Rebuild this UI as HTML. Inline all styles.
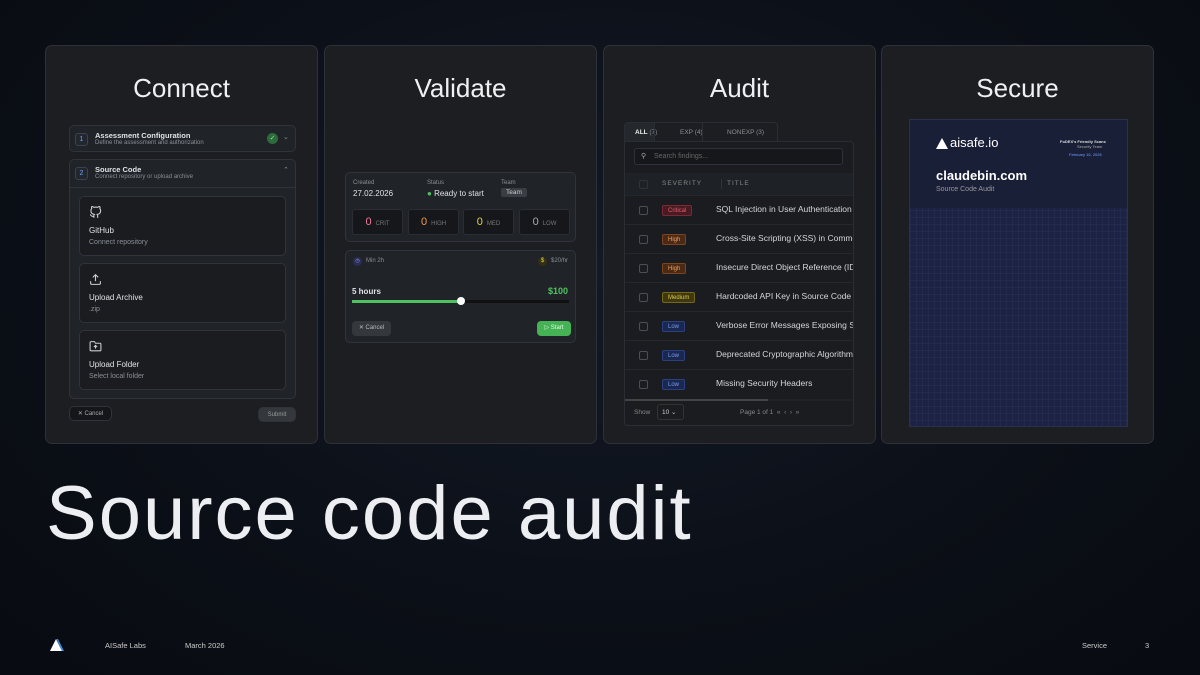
<!DOCTYPE html>
<html><head><meta charset="utf-8"><style>
*{margin:0;padding:0;box-sizing:border-box}
body{width:1200px;height:675px;overflow:hidden;background:radial-gradient(ellipse at 50% 40%,#131a26 0%,#0b0f17 60%,#080b11 100%);font-family:"Liberation Sans",sans-serif;color:#e6e8eb;position:relative}
.card{position:absolute;top:45px;width:273px;height:399px;background:#1c1e22;border:1px solid #2e3137;border-radius:7px}
.ttl{position:absolute;top:27px;width:100%;text-align:center;font-size:26px;color:#eef0f2}
.abs{position:absolute}
.box{position:absolute;border:1px solid #30333a;border-radius:5px;background:#1a1c20}
.s{font-size:7px;color:#8a8f97}
.w{font-size:8px;color:#e0e2e5}
.num{display:inline-block;width:13px;height:13px;border:1px solid #3a4150;border-radius:3px;font-size:7px;color:#6aa0ff;text-align:center;line-height:12px;background:#22262d}
.stat{position:absolute;top:36px;width:51px;height:26px;background:#15171a;border:1px solid #2a2d33;border-radius:3px;font-size:6px;color:#777;line-height:25px;text-align:center}
.stat b{font-size:11px;font-weight:normal;margin-right:4px}
.row{position:absolute;left:0;width:229px;height:29px;border-top:1px solid #24272c}
.cb{position:absolute;left:14px;top:10px;width:9px;height:9px;border:1px solid #4a4e56;border-radius:2px}
.bd{position:absolute;left:37px;top:9px;height:11px;border-radius:2px;font-size:6px;line-height:10px;padding:0 5px}
.rt{position:absolute;left:91px;top:8px;font-size:8.5px;color:#d4d6da;white-space:nowrap}
</style></head><body>

<div class="card" style="left:45px"><div class="ttl">Connect</div>
 <div class="box" style="left:23px;top:79px;width:227px;height:27px;background:#202328">
  <span class="num abs" style="left:5px;top:7px">1</span>
  <div class="abs w" style="left:25px;top:5px;font-weight:bold;font-size:7.5px">Assessment Configuration</div>
  <div class="abs s" style="left:25px;top:14px;font-size:6px">Define the assessment and authorization</div>
  <div class="abs" style="left:197px;top:7px;width:11px;height:11px;border-radius:50%;background:#2e6b3a;color:#8fe39a;font-size:7px;text-align:center;line-height:11px">✓</div>
  <div class="abs s" style="left:213px;top:7px">⌄</div>
 </div>
 <div class="box" style="left:23px;top:113px;width:227px;height:240px;background:#202328">
  <span class="num abs" style="left:5px;top:7px">2</span>
  <div class="abs w" style="left:25px;top:5px;font-weight:bold;font-size:7.5px">Source Code</div>
  <div class="abs s" style="left:25px;top:14px;font-size:6px">Connect repository or upload archive</div>
  <div class="abs s" style="left:213px;top:6px">⌃</div>
  <div class="abs" style="left:0;top:27px;width:225px;border-top:1px solid #30333a"></div>
  <div class="box" style="left:9px;top:36px;width:207px;height:60px">
   <svg class="abs" style="left:9px;top:9px" width="13" height="13" viewBox="0 0 24 24" fill="none" stroke="#ccc" stroke-width="2"><path d="M9 19c-5 1.5-5-2.5-7-3m14 6v-3.9a3.4 3.4 0 0 0-.9-2.6c3.1-.3 6.4-1.5 6.4-7A5.4 5.4 0 0 0 20 4.8 5 5 0 0 0 19.9 1S18.7.7 16 2.5a13.4 13.4 0 0 0-7 0C6.3.7 5.1 1 5.1 1A5 5 0 0 0 5 4.8 5.4 5.4 0 0 0 3.5 8.5c0 5.4 3.3 6.6 6.4 7a3.4 3.4 0 0 0-.9 2.6V22"/></svg>
   <div class="abs w" style="left:9px;top:29px">GitHub</div><div class="abs s" style="left:9px;top:42px">Connect repository</div></div>
  <div class="box" style="left:9px;top:103px;width:207px;height:60px">
   <svg class="abs" style="left:9px;top:9px" width="13" height="13" viewBox="0 0 24 24" fill="none" stroke="#ccc" stroke-width="2"><path d="M21 15v4a2 2 0 0 1-2 2H5a2 2 0 0 1-2-2v-4M17 8l-5-5-5 5M12 3v12"/></svg>
   <div class="abs w" style="left:9px;top:29px">Upload Archive</div><div class="abs s" style="left:9px;top:42px">.zip</div></div>
  <div class="box" style="left:9px;top:170px;width:207px;height:60px">
   <svg class="abs" style="left:9px;top:9px" width="13" height="13" viewBox="0 0 24 24" fill="none" stroke="#ccc" stroke-width="2"><path d="M4 20h16a2 2 0 0 0 2-2V8a2 2 0 0 0-2-2h-8l-2-3H4a2 2 0 0 0-2 2v13a2 2 0 0 0 2 2zM12 10v6M9 13l3-3 3 3"/></svg>
   <div class="abs w" style="left:9px;top:29px">Upload Folder</div><div class="abs s" style="left:9px;top:42px">Select local folder</div></div>
 </div>
 <div class="box abs" style="left:23px;top:360px;width:43px;height:15px;background:#141619;font-size:6px;color:#aaa;text-align:center;line-height:14px">✕ Cancel</div>
 <div class="box abs" style="left:212px;top:361px;width:38px;height:15px;background:#34373c;font-size:6px;color:#999;text-align:center;line-height:14px">Submit</div>
</div>

<div class="card" style="left:324px"><div class="ttl">Validate</div>
 <div class="box" style="left:20px;top:126px;width:231px;height:70px;background:#202328">
  <div class="abs s" style="left:7px;top:7px;font-size:6px">Created</div><div class="abs w" style="left:7px;top:16px">27.02.2026</div>
  <div class="abs s" style="left:81px;top:7px;font-size:6px">Status</div>
  <div class="abs w" style="left:81px;top:16px"><span style="color:#4fc25f">●</span> Ready to start</div>
  <div class="abs s" style="left:155px;top:7px;font-size:6px">Team</div>
  <div class="abs" style="left:155px;top:15px;background:#3a3d43;border-radius:2px;font-size:6.5px;color:#ccc;padding:1px 5px">Team</div>
  <div class="stat" style="left:6px"><b style="color:#f47a9a">0</b>CRIT</div>
  <div class="stat" style="left:62px"><b style="color:#f59a4a">0</b>HIGH</div>
  <div class="stat" style="left:117px"><b style="color:#e8d040">0</b>MED</div>
  <div class="stat" style="left:173px"><b style="color:#aaa">0</b>LOW</div>
 </div>
 <div class="box" style="left:20px;top:204px;width:231px;height:93px;background:#202328">
  <div class="abs" style="left:7px;top:6px;width:9px;height:9px;border-radius:50%;background:#2a2d55;font-size:5px;color:#9aa0ff;text-align:center;line-height:9px">◷</div>
  <div class="abs s" style="left:20px;top:7px;font-size:6px">Min 2h</div>
  <div class="abs" style="left:192px;top:6px;width:9px;height:9px;border-radius:50%;background:#333015;font-size:6px;color:#e8d040;text-align:center;line-height:9px">$</div>
  <div class="abs s" style="left:205px;top:7px;font-size:6px">$20/hr</div>
  <div class="abs w" style="left:6px;top:36px;font-weight:bold">5 hours</div>
  <div class="abs" style="right:7px;top:35px;font-size:9px;color:#4fc25f;font-weight:bold">$100</div>
  <div class="abs" style="left:6px;top:49px;width:217px;height:3px;background:#111"></div>
  <div class="abs" style="left:6px;top:49px;width:109px;height:3px;background:#4fc25f"></div>
  <div class="abs" style="left:111px;top:46px;width:8px;height:8px;border-radius:50%;background:#fff"></div>
  <div class="abs" style="left:6px;top:70px;width:39px;height:15px;border-radius:4px;background:#34373c;font-size:6px;color:#bbb;text-align:center;line-height:15px">✕ Cancel</div>
  <div class="abs" style="left:191px;top:70px;width:34px;height:15px;border-radius:4px;background:#46b256;font-size:6px;color:#dfd;text-align:center;line-height:15px">▷ Start</div>
 </div>
</div>

<div class="card" style="left:603px"><div class="ttl">Audit</div>
 <div class="abs" style="left:20px;top:76px;width:154px;height:20px;border:1px solid #2a2d33;border-bottom:none;border-radius:4px 4px 0 0;font-size:6.5px;color:#8a8f97">
  <span class="abs" style="left:0;top:0;width:29px;height:19px;background:#24272c"></span>
  <span class="abs" style="left:10px;top:6px;color:#eee;font-weight:bold">ALL <span style="font-weight:normal;color:#888">(7)</span></span>
  <span class="abs" style="left:29px;top:0;height:20px;border-left:1px solid #2a2d33"></span>
  <span class="abs" style="left:55px;top:6px">EXP (4)</span>
  <span class="abs" style="left:77px;top:0;height:20px;border-left:1px solid #2a2d33"></span>
  <span class="abs" style="left:102px;top:6px">NONEXP (3)</span></div>
 <div class="abs" style="left:20px;top:95px;width:230px;height:285px;background:#1a1c20;border:1px solid #2a2d33;border-radius:0 4px 4px 4px;overflow:hidden">
  <div class="abs" style="left:9px;top:6px;width:209px;height:17px;border:1px solid #2e3137;border-radius:3px;background:#15171a;font-size:7px;color:#666;line-height:15px;padding-left:19px">Search findings...<span class="abs" style="left:6px;top:0;color:#aaa">⚲</span></div>
  <div class="abs" style="left:0;top:31px;width:229px;height:22px;background:#1e2125"></div>
  <div class="cb" style="top:38px;border-color:#333"></div>
  <div class="abs" style="left:37px;top:38px;font-size:6.5px;color:#888;letter-spacing:1px">SEVERITY</div>
  <div class="abs" style="left:96px;top:37px;height:10px;border-left:1px solid #333"></div>
  <div class="abs" style="left:102px;top:38px;font-size:6.5px;color:#888;letter-spacing:1px">TITLE</div>
  <div class="row" style="top:53px"><div class="cb"></div><div class="bd" style="background:#4a1a22;border:1px solid #7a2a35;color:#e06070">Critical</div><div class="rt">SQL Injection in User Authentication</div></div>
  <div class="row" style="top:82px"><div class="cb"></div><div class="bd" style="background:#4a2a15;border:1px solid #7a4520;color:#f0a060">High</div><div class="rt">Cross-Site Scripting (XSS) in Comme</div></div>
  <div class="row" style="top:111px"><div class="cb"></div><div class="bd" style="background:#4a2a15;border:1px solid #7a4520;color:#f0a060">High</div><div class="rt">Insecure Direct Object Reference (ID</div></div>
  <div class="row" style="top:140px"><div class="cb"></div><div class="bd" style="background:#3d3810;border:1px solid #75681a;color:#e0c840">Medium</div><div class="rt">Hardcoded API Key in Source Code</div></div>
  <div class="row" style="top:169px"><div class="cb"></div><div class="bd" style="background:#1a2850;border:1px solid #2a4080;color:#7a9af0">Low</div><div class="rt">Verbose Error Messages Exposing St</div></div>
  <div class="row" style="top:198px"><div class="cb"></div><div class="bd" style="background:#1a2850;border:1px solid #2a4080;color:#7a9af0">Low</div><div class="rt">Deprecated Cryptographic Algorithm</div></div>
  <div class="row" style="top:227px"><div class="cb"></div><div class="bd" style="background:#1a2850;border:1px solid #2a4080;color:#7a9af0">Low</div><div class="rt">Missing Security Headers</div></div>
  <div class="abs" style="left:0;top:257px;width:229px;height:2px;background:#222"></div>
  <div class="abs" style="left:0;top:257px;width:143px;height:2px;background:#444"></div>
  <div class="abs" style="left:9px;top:267px;font-size:6.5px;color:#888">Show</div>
  <div class="abs" style="left:32px;top:262px;width:27px;height:16px;border:1px solid #333;border-radius:3px;font-size:6.5px;color:#ccc;line-height:15px;padding-left:4px">10 ⌄</div>
  <div class="abs" style="left:115px;top:267px;font-size:6.5px;color:#888">Page 1 of 1 &nbsp;« &nbsp;‹ &nbsp;› &nbsp;»</div>
 </div>
</div>

<div class="card" style="left:881px"><div class="ttl">Secure</div>
 <div class="abs" style="left:27px;top:73px;width:219px;height:308px;background:#1a1f38;border:1px solid #2a3050;overflow:hidden">
  <div class="abs" style="left:0;top:88px;width:219px;height:220px;background:repeating-linear-gradient(90deg,rgba(60,75,120,.18) 0 1px,transparent 1px 6px),repeating-linear-gradient(0deg,rgba(60,75,120,.18) 0 1px,transparent 1px 7px),#1c2242"></div>
  <svg class="abs" style="left:26px;top:18px" width="12" height="11" viewBox="0 0 12 11"><path d="M6 0L12 11H0Z" fill="#fff"/></svg>
  <div class="abs" style="left:40px;top:15px;font-size:13px;color:#fff">aisafe.io</div>
  <div class="abs" style="left:150px;top:19px;font-size:4px;color:#ddd;font-weight:bold">FoDEX's Friendly Scans</div>
  <div class="abs" style="left:167px;top:24px;font-size:4px;color:#aaa">Security Team</div>
  <div class="abs" style="left:159px;top:32px;font-size:4px;color:#6aa0ff">February 16, 2026</div>
  <div class="abs" style="left:26px;top:48px;font-size:13px;color:#fff;font-weight:bold">claudebin.com</div>
  <div class="abs" style="left:26px;top:66px;font-size:7px;color:#999">Source Code Audit</div>
 </div>
</div>

<div class="abs" style="left:46px;top:470px;font-size:76px;color:#eceef1;letter-spacing:2px">Source code audit</div>

<svg class="abs" style="left:50px;top:639px" width="15" height="12" viewBox="0 0 15 12"><path d="M6 0L12 12H0Z" fill="#fff"/><path d="M8 0L14 12H12L6.5 0Z" fill="#3a8ae0"/></svg>
<div class="abs" style="left:105px;top:641px;font-size:7.5px;color:#ccc">AISafe Labs</div>
<div class="abs" style="left:185px;top:641px;font-size:7.5px;color:#ccc">March 2026</div>
<div class="abs" style="left:1082px;top:641px;font-size:7.5px;color:#ccc">Service</div>
<div class="abs" style="left:1145px;top:641px;font-size:7.5px;color:#ccc">3</div>
</body></html>
